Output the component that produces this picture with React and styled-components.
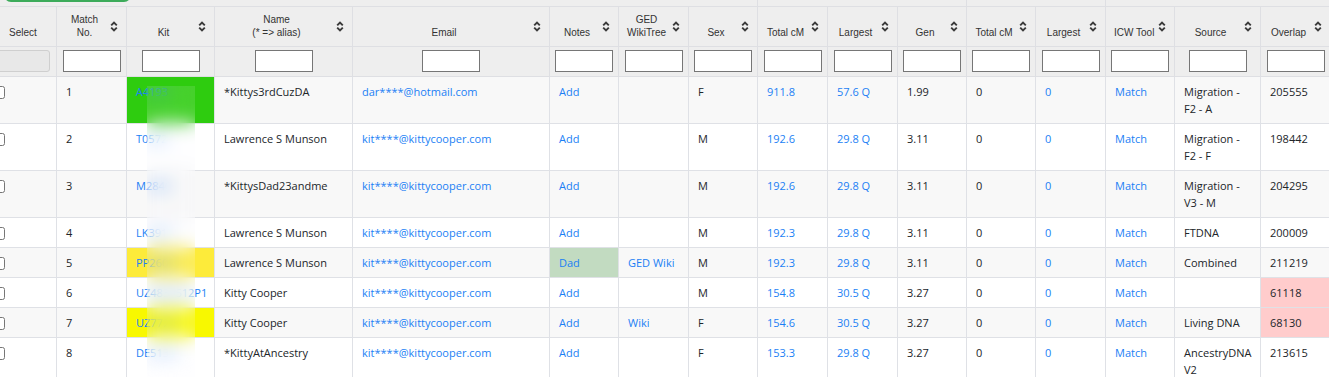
import styled, { createGlobalStyle } from "styled-components";

const GlobalStyle = createGlobalStyle`
  body {
    margin: 0;
    overflow: hidden;
    background: #fff;
  }
`;

const TableWrap = styled.div`
  position: relative;
  margin-left: -11px;
  width: 1341px;
`;

const Table = styled.table`
  border-collapse: collapse;
  table-layout: fixed;
  width: 1341px;
  font-family: "Open Sans", "Liberation Sans", sans-serif;
  font-size: 11px;
  color: #212529;
`;

const GroupCell = styled.th`
  position: relative;
  height: 6px;
  padding: 0;
  background: #eeeeee;
  border-left: 1px solid #dedfe3;
  border-right: 1px solid #dedfe3;
  border-bottom: 1px solid #dedfe3;
`;

const TopButton = styled.button`
  position: absolute;
  top: -28px;
  left: 14px;
  width: 127px;
  height: 30px;
  border: 0;
  border-radius: 7px;
  background: #3cab5a;
`;

const Th = styled.th`
  position: relative;
  height: 26px;
  padding: ${(p) => (p.$plain ? "6px 8px 7px" : "6px 22px 7px 8px")};
  background: #eeeeee;
  border: 1px solid #dedfe3;
  vertical-align: bottom;
  text-align: center;
  white-space: nowrap;
  font-family: "Liberation Sans", Arial, sans-serif;
  font-size: 10px;
  font-weight: normal;
  line-height: 13px;
  color: #333;
`;

const Sort = styled.svg`
  position: absolute;
  right: 8px;
  top: 50%;
  margin-top: -6px;
  width: 8px;
  height: 11px;
`;

const FilterCell = styled.td`
  height: 20px;
  padding: 3px 4px 4px;
  background: #eeeeee;
  border: 1px solid #dedfe3;
  text-align: center;
`;

const FilterInput = styled.input`
  box-sizing: border-box;
  width: 58px;
  height: 22px;
  margin: 0;
  border: 1px solid #767676;
  background: #fff;
  vertical-align: middle;
`;

const DisabledInput = styled.input`
  box-sizing: border-box;
  width: 58px;
  height: 22px;
  margin: 0 0 0 -4px;
  border: 1px solid #cfcfcf;
  border-radius: 3px;
  background: #e8e8e8;
  vertical-align: middle;
`;

const Row = styled.tr`
  background: ${(p) => (p.$odd ? "#f8f8f8" : "#fff")};
`;

const Td = styled.td`
  padding: 6px 9px;
  border: 1px solid #dfe1e6;
  vertical-align: top;
  line-height: 17px;
  background: ${(p) => p.$bg || "transparent"};
  overflow: hidden;
  white-space: ${(p) => (p.$nowrap ? "nowrap" : "normal")};
`;

const CheckCell = styled.td`
  padding: 6px 4px;
  border: 1px solid #dfe1e6;
  vertical-align: top;
  line-height: 17px;
`;

const Check = styled.input`
  width: 13px;
  height: 13px;
  margin: 3px 0 0 -2px;
  vertical-align: top;
`;

const Link = styled.a`
  color: #1b7ff5;
  text-decoration: none;
  cursor: pointer;
`;

const Blur = styled.div`
  position: absolute;
  left: 158px;
  top: 86px;
  width: 48px;
  bottom: 0;
  backdrop-filter: blur(9px);
  background: rgba(244, 248, 252, 0.12);
`;

const cols = [67, 70, 88, 138, 197, 69, 70, 69, 70, 70, 69, 69, 70, 69, 86, 70];

const headers = [
  ["Match", "No."],
  ["Kit"],
  ["Name", "(* => alias)"],
  ["Email"],
  ["Notes"],
  ["GED", "WikiTree"],
  ["Sex"],
  ["Total cM"],
  ["Largest"],
  ["Gen"],
  ["Total cM"],
  ["Largest"],
  ["ICW Tool"],
  ["Source"],
  ["Overlap"],
];

const rows = [
  { no: 1, kit: "A4193", kitBg: "#2ecc0f", name: "*Kittys3rdCuzDA", email: "dar****@hotmail.com", note: "Add", ged: "", sex: "F", cm: "911.8", lg: "57.6 Q", gen: "1.99", source: "Migration - F2 - A", overlap: "205555" },
  { no: 2, kit: "T0572", name: "Lawrence S Munson", email: "kit****@kittycooper.com", note: "Add", ged: "", sex: "M", cm: "192.6", lg: "29.8 Q", gen: "3.11", source: "Migration - F2 - F", overlap: "198442" },
  { no: 3, kit: "M2840", name: "*KittysDad23andme", email: "kit****@kittycooper.com", note: "Add", ged: "", sex: "M", cm: "192.6", lg: "29.8 Q", gen: "3.11", source: "Migration - V3 - M", overlap: "204295" },
  { no: 4, kit: "LK3917", name: "Lawrence S Munson", email: "kit****@kittycooper.com", note: "Add", ged: "", sex: "M", cm: "192.3", lg: "29.8 Q", gen: "3.11", source: "FTDNA", overlap: "200009" },
  { no: 5, kit: "PP2608", kitBg: "#fdeb3a", name: "Lawrence S Munson", email: "kit****@kittycooper.com", note: "Dad", noteBg: "#c2dbc1", ged: "GED Wiki", sex: "M", cm: "192.3", lg: "29.8 Q", gen: "3.11", source: "Combined", overlap: "211219" },
  { no: 6, kit: "UZ4830512P1", name: "Kitty Cooper", email: "kit****@kittycooper.com", note: "Add", ged: "", sex: "M", cm: "154.8", lg: "30.5 Q", gen: "3.27", source: "", overlap: "61118", overlapBg: "#ffcccc" },
  { no: 7, kit: "UZ7720", kitBg: "#f8f800", name: "Kitty Cooper", email: "kit****@kittycooper.com", note: "Add", ged: "Wiki", sex: "F", cm: "154.6", lg: "30.5 Q", gen: "3.27", source: "Living DNA", overlap: "68130", overlapBg: "#ffcccc" },
  { no: 8, kit: "DE5139", name: "*KittyAtAncestry", email: "kit****@kittycooper.com", note: "Add", ged: "", sex: "F", cm: "153.3", lg: "29.8 Q", gen: "3.27", source: "AncestryDNA V2", overlap: "213615" },
];

function SortIcon() {
  return (
    <Sort viewBox="0 0 8 11">
      <path d="M1.2 4.3 L4 1.5 L6.8 4.3 M1.2 6.7 L4 9.5 L6.8 6.7" fill="none" stroke="#3a3a3a" strokeWidth="1.9" />
    </Sort>
  );
}

export default function App() {
  return (
    <>
      <GlobalStyle />
      <TableWrap>
        <Table>
          <colgroup>
            {cols.map((w, i) => (
              <col key={i} style={{ width: w }} />
            ))}
          </colgroup>
          <thead>
            <tr>
              <GroupCell colSpan={8}>
                <TopButton aria-label="Show options" />
              </GroupCell>
              <GroupCell colSpan={3} />
              <GroupCell colSpan={2} />
              <GroupCell colSpan={3} />
            </tr>
            <tr>
              <Th $plain>Select</Th>
              {headers.map((h, i) => (
                <Th key={i}>
                  {h.map((line, j) => (
                    <div key={j}>{line}</div>
                  ))}
                  <SortIcon />
                </Th>
              ))}
            </tr>
            <tr>
              <FilterCell>
                <DisabledInput disabled />
              </FilterCell>
              {headers.map((h, i) => (
                <FilterCell key={i}>
                  <FilterInput />
                </FilterCell>
              ))}
            </tr>
          </thead>
          <tbody>
            {rows.map((r, i) => (
              <Row key={r.no} $odd={i % 2 === 0}>
                <CheckCell>
                  <Check type="checkbox" />
                </CheckCell>
                <Td>{r.no}</Td>
                <Td $bg={r.kitBg} $nowrap>
                  <Link>{r.kit}</Link>
                </Td>
                <Td>{r.name}</Td>
                <Td>
                  <Link>{r.email}</Link>
                </Td>
                <Td $bg={r.noteBg}>
                  <Link>{r.note}</Link>
                </Td>
                <Td>
                  <Link>{r.ged}</Link>
                </Td>
                <Td>{r.sex}</Td>
                <Td>
                  <Link>{r.cm}</Link>
                </Td>
                <Td>
                  <Link>{r.lg}</Link>
                </Td>
                <Td>{r.gen}</Td>
                <Td>0</Td>
                <Td>
                  <Link>0</Link>
                </Td>
                <Td>
                  <Link>Match</Link>
                </Td>
                <Td>{r.source}</Td>
                <Td $bg={r.overlapBg}>{r.overlap}</Td>
              </Row>
            ))}
          </tbody>
        </Table>
        <Blur />
      </TableWrap>
    </>
  );
}
